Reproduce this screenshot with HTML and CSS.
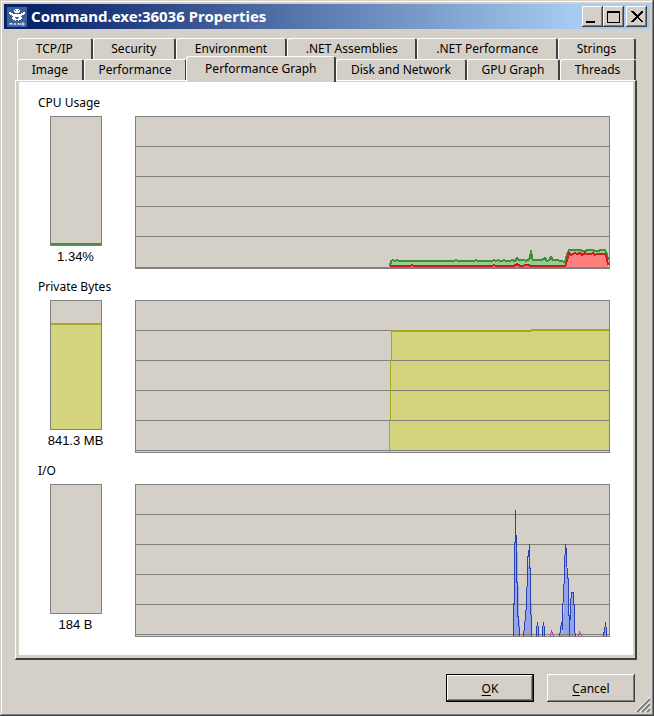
FILE: index.html
```html
<!DOCTYPE html>
<html lang="en">
<head>
    <meta charset="UTF-8">
    <meta name="viewport" content="width=device-width, initial-scale=1.0">
    <title>Command.exe:36036 Properties</title>
    <link rel="stylesheet" href="styles.css">
</head>
<body>
    <div class="window">
        <header class="titlebar">
            <svg class="app-icon" viewBox="0 0 20 20" aria-hidden="true">
                <rect width="20" height="20" fill="#3c6098"/>
                <path d="M8 2h4v1h1v2h-1v1H8V5H7V3h1z" fill="#fff"/>
                <path d="M2 5h2v1h2v1h8V6h2V5h2v2h-1v1h-2v1h-1v1h1v2h-1v1h-2v1h-1v-1H9v1H8v-1H6v-1H5v-2h1V9H5V8H3V7H2z" fill="#fff"/>
                <path d="M8 3h1v1H8zM11 3h1v1h-1zM8 10h4v1h-1v1H9v-1H8z" fill="#3c6098"/>
                <path d="M3 18v-2l1 1 1-1v2M7 18l1-2 1 2M11 18v-2l2 2v-2M15 16h2v2h-2z" fill="none" stroke="#dfe6f0"/>
            </svg>
            <h1>Command.exe:36036 Properties</h1>
            <div class="window-buttons">
                <button type="button" aria-label="Minimize"><svg viewBox="0 0 17 17"><path d="M2 13h9v2H2z"/></svg></button>
                <button type="button" aria-label="Maximize"><svg viewBox="0 0 17 17"><path d="M2 3h13v12H2zM3 5v9h11V5z" fill-rule="evenodd"/></svg></button>
                <button type="button" class="close" aria-label="Close"><svg viewBox="0 0 17 17"><path d="M3 3h2l4 4 4-4h2v1l-5 5 5 4v1h-2l-4-4-4 4H3v-1l5-4-5-5z"/></svg></button>
            </div>
        </header>

        <main>
            <div class="tabs" role="tablist">
                <div class="tab-row">
                    <button type="button" role="tab">TCP/IP</button>
                    <button type="button" role="tab">Security</button>
                    <button type="button" role="tab">Environment</button>
                    <button type="button" role="tab">.NET Assemblies</button>
                    <button type="button" role="tab">.NET Performance</button>
                    <button type="button" role="tab">Strings</button>
                </div>
                <div class="tab-row">
                    <button type="button" role="tab">Image</button>
                    <button type="button" role="tab">Performance</button>
                    <button type="button" role="tab" class="active" aria-selected="true">Performance Graph</button>
                    <button type="button" role="tab">Disk and Network</button>
                    <button type="button" role="tab">GPU Graph</button>
                    <button type="button" role="tab">Threads</button>
                </div>
            </div>

            <div class="panel" role="tabpanel">
                <div class="page">
                    <section>
                        <h2>CPU Usage</h2>
                        <div class="row">
                            <div class="gauge">
                                <div class="bar"><div class="level cpu" style="height: 1.34%"></div></div>
                                <span>1.34%</span>
                            </div>
                            <svg class="graph" viewBox="1 1 473 151" preserveAspectRatio="none">
                                <path class="cpu-fill" d="M255 152V151L256 145H380L382 142L385 145L394 143L396 134L398 144H407L410 142L412 144L416 141L419 144L430 145L434 135H470L473 145V152z"/>
                                <path class="kernel-fill" d="M255 152V150H430L434 138H470L473 150V152z"/>
                                <path class="grid" d="M0 30.5H475M0 60.5H475M0 90.5H475M0 120.5H475M0 151.5H475"/>
                                <path class="cpu-line" d="M255 150L256 145L258 144L260 145L262 144L264 145H319L321 144L323 145H339L341 144L343 145H357L359 144L361 145L363 144L365 145H367L369 144L371 145H375L377 144L380 145L382 142L384 144H389L391 145L394 143L395 142L396 134L397 142L398 144H407L410 142L412 145L414 144L416 141L418 144L422 144L426 145L430 146L432 138L434 134H445L448 135L450 135L453 134H457L460 135H463L466 134H470L472 138L473 144"/>
                                <path class="kernel-line" d="M255 150H275L277 149L279 150H357L359 149L361 150H379L382 148L385 150L393 149L396 150H430L432 145L434 137L436 139L440 137L442 138L445 137L447 139L450 137L452 138L456 138L458 137L460 139L462 138H470L472 142L473 149"/>
                            </svg>
                        </div>
                    </section>

                    <section>
                        <h2>Private Bytes</h2>
                        <div class="row">
                            <div class="gauge">
                                <div class="bar"><div class="level memory" style="height: 83%"></div></div>
                                <span>841.3 MB</span>
                            </div>
                            <svg class="graph" viewBox="1 1 473 151" preserveAspectRatio="none">
                                <path class="memory-fill" d="M255 150V121L256 60V31H396V30H475V150z"/>
                                <path class="grid" d="M0 30.5H475M0 60.5H475M0 90.5H475M0 120.5H475M0 150.5H475"/>
                                <path class="memory-edge" d="M256.5 31V60M255.5 60V121M254.5 121V152"/>
                                <path class="memory-line" d="M256 31H396M396 30H475"/>
                            </svg>
                        </div>
                    </section>

                    <section>
                        <h2>I/O</h2>
                        <div class="row">
                            <div class="gauge">
                                <div class="bar"></div>
                                <span>184 B</span>
                            </div>
                            <svg class="graph" viewBox="1 1 473 151" preserveAspectRatio="none">
                                <path class="io-fill" d="M378 152L380 58L382 50L385 152M388 152L391 132L394 72L396 85L397 152M401 152L402 138L404 152M407 152L408 138L410 152M424 152L426 138L428 152L430 60L433 95L434 152L436 108H438L440 152M469 152L470 138L472 152"/>
                                <path class="grid" d="M0 30.5H475M0 60.5H475M0 90.5H475M0 120.5H475M0 150.5H475"/>
                                <path class="io-line" d="M378.5 152V121L379.5 118V58H380.5V26V50L381.5 52V98L382.5 99V132L383.5 133L384.5 152M388.5 152L390.5 132L391.5 120V104L392.5 102V72H393.5L394.5 60V84H395.5V130L396.5 132V152M401.5 152V146L402.5 138L403.5 146V152M407.5 152V146L408.5 138L409.5 146V152M424.5 152L425.5 146L426.5 138L427.5 146V120L428.5 118L429.5 83L430.5 60V64H431.5V72L432.5 94H433.5V131L434.5 132V152L435.5 120L436.5 108H438.5V120H439.5V146L440.5 152M468.5 152V149L469.5 148L470.5 138L471.5 148V152"/>
                                <path class="io-write" d="M415.5 152L416.5 147L418.5 152M443.5 152L444.5 148L446.5 152"/>
                            </svg>
                        </div>
                    </section>
                </div>
            </div>
        </main>

        <footer class="actions">
            <button type="submit" class="default"><u>O</u>K</button>
            <button type="button"><u>C</u>ancel</button>
            <svg class="grip" viewBox="0 0 16 16" aria-hidden="true">
                <path d="M0 15L15 0M5 15L15 5M10 15L15 10" stroke="#fff"/>
                <path d="M2 15L15 2M7 15L15 7M12 15L15 12" stroke="#808080" stroke-width="2"/>
            </svg>
        </footer>
    </div>
</body>
</html>
```
FILE: styles.css
```css
* {
    box-sizing: border-box;
}

body {
    margin: 0;
    background: #d4d0c8;
    color: #000;
    font-family: Tahoma, "Noto Sans", sans-serif;
    font-size: 12px;
}

button {
    font: inherit;
    color: inherit;
    background: #d4d0c8;
    padding: 0;
    margin: 0;
}

.window {
    position: relative;
    display: flex;
    flex-direction: column;
    min-height: 100vh;
    padding: 4px 4px 14px;
    box-shadow: inset -1px -1px #404040, inset 1px 1px #d4d0c8, inset -2px -2px #808080, inset 2px 2px #fff;
}

/* title bar */
.titlebar {
    display: flex;
    align-items: center;
    height: 25px;
    padding: 0 3px;
    background: linear-gradient(to right, #0a246a 5%, #a6caf0 88%);
}

.app-icon {
    width: 20px;
    height: 20px;
    margin-right: 4px;
}

.titlebar h1 {
    flex: 1;
    margin: 0;
    color: #fff;
    font-size: 15px;
    font-weight: bold;
    line-height: 25px;
}

.window-buttons {
    display: flex;
}

.window-buttons button {
    width: 21px;
    height: 21px;
    border: none;
    box-shadow: inset -1px -1px #404040, inset 1px 1px #fff, inset -2px -2px #808080;
}

.window-buttons svg {
    display: block;
    width: 17px;
    height: 17px;
    margin: 0 2px;
    shape-rendering: crispEdges;
}

.window-buttons .close {
    margin-left: 2px;
}

/* tabs */
main {
    flex: 1;
    display: flex;
    flex-direction: column;
    padding: 9px 13px 0 11px;
}

.tabs {
    padding: 0 1px 0 2px;
}

.tab-row {
    display: flex;
    height: 21px;
}

.tab-row button {
    flex: 1 1 auto;
    border: 1px solid #fff;
    border-right: 2px solid #404040;
    border-bottom: none;
    border-radius: 3px 3px 0 0;
    line-height: 20px;
    white-space: nowrap;
}

.tab-row .active {
    position: relative;
    z-index: 1;
    height: 26px;
    margin: -3px 0 0 -1px;
    padding: 0 4px 2px;
}

.panel {
    flex: 1;
    display: flex;
    padding: 1px 3px 3px;
    border: 1px solid #fff;
    border-right: 2px solid #404040;
    border-bottom: 2px solid #404040;
}

.page {
    flex: 1;
    padding: 12px 23px 4px 19px;
    background: #fff;
}

/* graphs */
section {
    margin-bottom: 9px;
}

h2 {
    margin: 0 0 4px;
    font-size: 12px;
    font-weight: normal;
    line-height: 18px;
}

.row {
    display: flex;
    gap: 22px;
}

.gauge {
    display: flex;
    flex-direction: column;
    align-items: center;
    width: 75px;
    font-family: "Liberation Sans", Arial, sans-serif;
    font-size: 13px;
    line-height: 22px;
}

.bar {
    display: flex;
    align-items: flex-end;
    width: 52px;
    height: 130px;
    border: 1px solid #808080;
    background: #d4d0c8;
}

.level {
    width: 100%;
}

.level.cpu {
    background: #4c8c4c;
}

.level.memory {
    border-top: 2px solid #a8a81c;
    background: #d4d47f;
}

.graph {
    flex: 1;
    min-width: 0;
    height: 153px;
    border: 1px solid #808080;
    background: #d4d0c8;
    shape-rendering: crispEdges;
}

.graph path {
    fill: none;
}

.graph .grid {
    stroke: #808080;
}

.graph .cpu-fill {
    fill: #94cc94;
}

.graph .cpu-line {
    stroke: #3c8f3c;
    stroke-width: 2;
}

.graph .kernel-fill {
    fill: #ff7f7f;
}

.graph .kernel-line {
    stroke: #d01818;
    stroke-width: 2;
}

.graph .memory-fill {
    fill: #d4d47f;
}

.graph .memory-edge {
    stroke: #a8a81c;
}

.graph .memory-line {
    stroke: #a8a81c;
    stroke-width: 2;
}

.graph .io-fill {
    fill: #94a4e8;
}

.graph .io-line {
    stroke: #2840b8;
}

.graph .io-write {
    stroke: #c030b0;
}

/* bottom buttons */
.actions {
    display: flex;
    justify-content: flex-end;
    gap: 13px;
    padding: 14px 15px 0;
}

.actions button {
    width: 88px;
    height: 28px;
    border: none;
    box-shadow: inset -1px -1px #404040, inset 1px 1px #fff, inset -2px -2px #808080;
}

.actions .default {
    border: 1px solid #000;
    box-shadow: inset -1px -1px #404040, inset 1px 1px #fff, inset -2px -2px #808080;
}

.actions u {
    text-underline-offset: 2px;
}

.grip {
    position: absolute;
    right: 3px;
    bottom: 3px;
    width: 16px;
    height: 16px;
}
```
